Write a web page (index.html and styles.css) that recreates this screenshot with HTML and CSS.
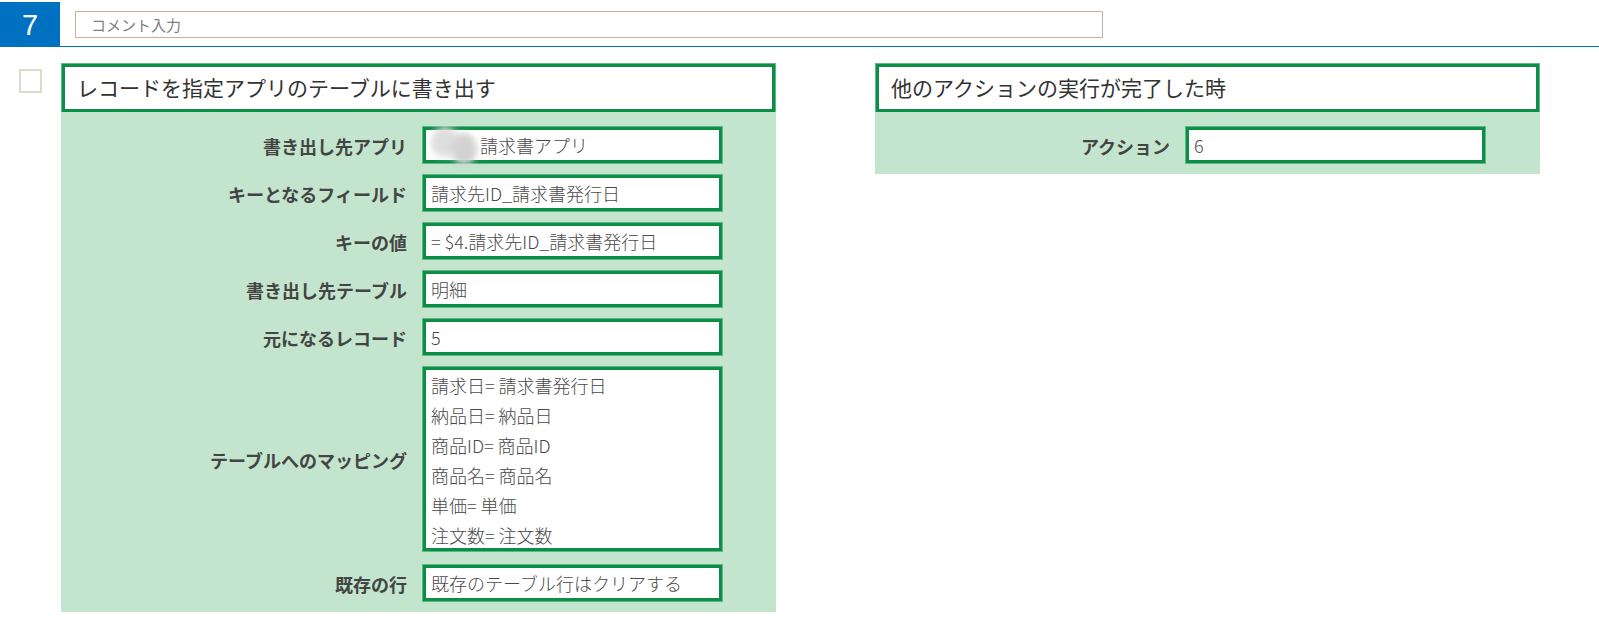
FILE: index.html
```html
<!DOCTYPE html>
<html lang="ja">
<head>
<meta charset="utf-8">
<title>アクション 7</title>
<link rel="stylesheet" href="styles.css">
</head>
<body>
<header class="topbar">
  <div class="step">7</div>
  <div class="comment">コメント入力</div>
</header>
<main class="content">
  <div class="check"></div>
  <section class="panel panel-left">
    <h2 class="title">レコードを指定アプリのテーブルに書き出す</h2>
    <div class="body">
      <div class="row"><span class="label">書き出し先アプリ</span><div class="field field-app"><span class="blur"></span><span class="blur blur-low"></span>請求書アプリ</div></div>
      <div class="row"><span class="label">キーとなるフィールド</span><div class="field">請求先ID_請求書発行日</div></div>
      <div class="row"><span class="label">キーの値</span><div class="field">= $4.請求先ID_請求書発行日</div></div>
      <div class="row"><span class="label">書き出し先テーブル</span><div class="field">明細</div></div>
      <div class="row"><span class="label">元になるレコード</span><div class="field">5</div></div>
      <div class="row"><span class="label">テーブルへのマッピング</span>
        <div class="field field-list">
          <div>請求日= 請求書発行日</div>
          <div>納品日= 納品日</div>
          <div>商品ID= 商品ID</div>
          <div>商品名= 商品名</div>
          <div>単価= 単価</div>
          <div>注文数= 注文数</div>
        </div>
      </div>
      <div class="row row-last"><span class="label">既存の行</span><div class="field">既存のテーブル行はクリアする</div></div>
    </div>
  </section>
  <section class="panel panel-right">
    <h2 class="title">他のアクションの実行が完了した時</h2>
    <div class="body">
      <div class="row"><span class="label">アクション</span><div class="field">6</div></div>
    </div>
  </section>
</main>
</body>
</html>
```
FILE: styles.css
```css
* { box-sizing: border-box; }
html, body { margin: 0; padding: 0; background: #fff; }
body {
  width: 1599px;
  height: 619px;
  overflow: hidden;
  padding-top: 2px;
  font-family: "Noto Sans CJK JP", "Noto Sans", sans-serif;
  color: #4a4a4a;
}
.topbar {
  display: flex;
  align-items: flex-start;
  height: 45px;
  border-bottom: 1px solid #0070c0;
}
.step {
  width: 60px;
  height: 44px;
  background: #0070c0;
  color: #fff;
  font: 29px/47px "Liberation Sans", sans-serif;
  text-align: center;
}
.comment {
  width: 1028px;
  height: 27px;
  margin: 9px 0 0 15px;
  padding-left: 15px;
  border: 1px solid #c8b29c;
  font-size: 15px;
  line-height: 25px;
  color: #808080;
  font-weight: 400;
}
.content {
  display: flex;
  align-items: flex-start;
  padding: 17px 0 0 19px;
}
.check {
  width: 23px;
  height: 24px;
  margin-top: 5px;
  border: 2px solid #e3d8cd;
}
.panel { flex: none; }
.panel-left { width: 713px; margin-left: 20px; }
.panel-right { width: 663px; margin-left: 101px; }
.title {
  height: 48px;
  margin: 0;
  padding-left: 12px;
  background: #fff;
  border: 3px solid #0b8e45;
  box-shadow: 0 0 0 1px #62b585;
  font-size: 21px;
  font-weight: 400;
  line-height: 41px;
  color: #333;
}
.body {
  display: flex;
  flex-direction: column;
  gap: 12px;
  margin-top: 1px;
  padding: 14px 0 10px;
  background: #c3e5cd;
  box-shadow: 0 0 0 1px #c3e5cd;
}
.row { display: flex; align-items: center; }
.row-last { margin-top: 2px; }
.label {
  flex: none;
  width: 346px;
  padding: 2px 1px 0 0;
  text-align: right;
  font-size: 18px;
  font-weight: 700;
  color: #444;
}
.panel-right .label { width: 295px; }
.field {
  position: relative;
  width: 299px;
  height: 36px;
  margin-left: 15px;
  padding-left: 5px;
  background: #fff;
  border: 3px solid #0b8e45;
  box-shadow: 0 0 0 1px #62b585;
  font-size: 18px;
  font-weight: 300;
  line-height: 30px;
  white-space: nowrap;
}
.field-app { padding-left: 54px; }
.field-list { height: 184px; line-height: 30px; }
.blur {
  position: absolute;
  left: 5px;
  top: -3px;
  width: 28px;
  height: 30px;
  border-radius: 50%;
  background: #dedede;
  filter: blur(3px);
}
.blur-low {
  left: 25px;
  top: 3px;
  width: 26px;
  height: 32px;
  background: #d2d2d2;
}
```
